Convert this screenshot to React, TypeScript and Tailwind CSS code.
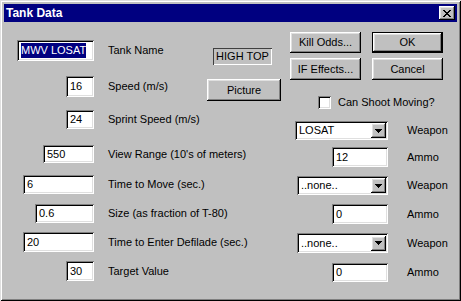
import type { ReactNode } from "react";

const sunken =
  "bg-white shadow-[inset_1px_1px_0_#808080,inset_-1px_-1px_0_#ffffff,inset_2px_2px_0_#000000,inset_-2px_-2px_0_#dfdfdf]";
const raised =
  "bg-[#c0c0c0] shadow-[inset_-1px_-1px_0_#000000,inset_1px_1px_0_#ffffff,inset_-2px_-2px_0_#808080,inset_2px_2px_0_#dfdfdf]";

function Field({ value, className }: { value: ReactNode; className: string }) {
  return (
    <div className={`${sunken} flex items-center pl-[4px] ${className}`}>
      <span className="leading-none">{value}</span>
    </div>
  );
}

function Combo({ value, className }: { value: string; className: string }) {
  return (
    <div className={`${sunken} flex items-center justify-between pl-[4px] pr-[2px] ${className}`}>
      <span className="leading-none">{value}</span>
      <div className={`${raised} w-[15px] h-[15px] flex items-center justify-center`}>
        <svg width="7" height="4" viewBox="0 0 7 4" shapeRendering="crispEdges">
          <path d="M0 0h7v1h-1v1h-1v1h-1v1h-1v-1h-1v-1h-1v-1h-1z" fill="#000" />
        </svg>
      </div>
    </div>
  );
}

function Button({ label, className }: { label: string; className: string }) {
  return (
    <div className={`${raised} flex items-center justify-center ${className}`}>
      <span className="leading-none">{label}</span>
    </div>
  );
}

function LeftRow({ field, label, className }: { field: ReactNode; label: string; className: string }) {
  return (
    <div className={`flex items-center ${className}`}>
      <div className="w-[90px] flex justify-end">{field}</div>
      <span className="ml-[14px] whitespace-nowrap leading-none">{label}</span>
    </div>
  );
}

function RightRow({ field, label, className }: { field: ReactNode; label: string; className: string }) {
  return (
    <div className={`flex items-center ${className}`}>
      <div className="w-[98px] flex justify-end">{field}</div>
      <span className="ml-[19px] whitespace-nowrap leading-none">{label}</span>
    </div>
  );
}

export default function App() {
  return (
    <div className="w-[461px] h-[301px] p-[4px] bg-[#c0c0c0] text-[11px] text-black font-['Liberation_Sans',Arial,sans-serif] shadow-[inset_1px_1px_0_#dfdfdf,inset_-1px_-1px_0_#000000,inset_2px_2px_0_#ffffff,inset_-2px_-2px_0_#808080]">
      {/* Title bar */}
      <div className="h-[18px] bg-[#000080] flex items-center justify-between pl-[2px] pr-[2px]">
        <span className="text-white font-bold text-[12px] leading-none">Tank Data</span>
        <div className={`${raised} w-[16px] h-[14px] flex items-center justify-center`}>
          <svg width="8" height="7" viewBox="0 0 8 7" shapeRendering="crispEdges">
            <path
              d="M0 0h2v1h1v1h2v-1h1v-1h2v1h-1v1h-1v1h-1v1h1v1h1v1h1v1h-2v-1h-1v-1h-2v1h-1v1h-2v-1h1v-1h1v-1h1v-1h-1v-1h-1v-1h-1z"
              fill="#000"
            />
          </svg>
        </div>
      </div>

      <div className="flex items-start">
        {/* Left section */}
        <div className="w-[286px] flex flex-col">
          <div className="flex items-start h-[79px]">
            <div className="w-[203px] flex flex-col">
              <LeftRow
                className="mt-[18px]"
                field={
                  <Field
                    className="w-[77px] h-[21px]"
                    value={<span className="bg-[#000080] text-white inline-block leading-[15px]">MWV LOSAT</span>}
                  />
                }
                label="Tank Name"
              />
              <LeftRow className="mt-[15px]" field={<Field value="16" className="w-[28px] h-[21px]" />} label="Speed (m/s)" />
            </div>
            <div className="flex flex-col items-start">
              <div className="mt-[26px] ml-[6px] w-[59px] h-[17px] flex items-center justify-center shadow-[inset_1px_1px_0_#404040,inset_-1px_-1px_0_#ffffff]">
                <span className="leading-none">HIGH TOP</span>
              </div>
              <Button label="Picture" className="mt-[14px] w-[74px] h-[22px]" />
            </div>
          </div>
          <LeftRow className="mt-[9px]" field={<Field value="24" className="w-[28px] h-[19px]" />} label="Sprint Speed (m/s)" />
          <LeftRow className="mt-[16px]" field={<Field value="550" className="w-[51px] h-[18px]" />} label="View Range (10's of meters)" />
          <LeftRow className="mt-[12px]" field={<Field value="6" className="w-[71px] h-[19px]" />} label="Time to Move (sec.)" />
          <LeftRow className="mt-[10px]" field={<Field value="0.6" className="w-[59px] h-[19px]" />} label="Size (as fraction of T-80)" />
          <LeftRow className="mt-[9px]" field={<Field value="20" className="w-[71px] h-[20px]" />} label="Time to Enter Defilade (sec.)" />
          <LeftRow className="mt-[9px]" field={<Field value="30" className="w-[28px] h-[20px]" />} label="Target Value" />
        </div>

        {/* Right section */}
        <div className="flex flex-col">
          <div className="mt-[10px] flex gap-[11px]">
            <Button label="Kill Odds..." className="w-[71px] h-[21px]" />
            <div className="w-[71px] h-[21px] border border-black">
              <Button label="OK" className="w-full h-full" />
            </div>
          </div>
          <div className="mt-[5px] flex gap-[11px]">
            <Button label="IF Effects..." className="w-[71px] h-[22px]" />
            <Button label="Cancel" className="w-[71px] h-[22px]" />
          </div>
          <div className="mt-[16px] ml-[28px] flex items-center gap-[7px]">
            <div className={`${sunken} w-[13px] h-[13px]`} />
            <span className="leading-none whitespace-nowrap">Can Shoot Moving?</span>
          </div>
          <RightRow className="mt-[12px]" field={<Combo value="LOSAT" className="w-[93px] h-[19px]" />} label="Weapon" />
          <RightRow className="mt-[7px]" field={<Field value="12" className="w-[56px] h-[20px]" />} label="Ammo" />
          <RightRow className="mt-[9px]" field={<Combo value="..none.." className="w-[91px] h-[19px]" />} label="Weapon" />
          <RightRow className="mt-[9px]" field={<Field value="0" className="w-[56px] h-[20px]" />} label="Ammo" />
          <RightRow className="mt-[9px]" field={<Combo value="..none.." className="w-[91px] h-[20px]" />} label="Weapon" />
          <RightRow className="mt-[10px]" field={<Field value="0" className="w-[56px] h-[19px]" />} label="Ammo" />
        </div>
      </div>
    </div>
  );
}
